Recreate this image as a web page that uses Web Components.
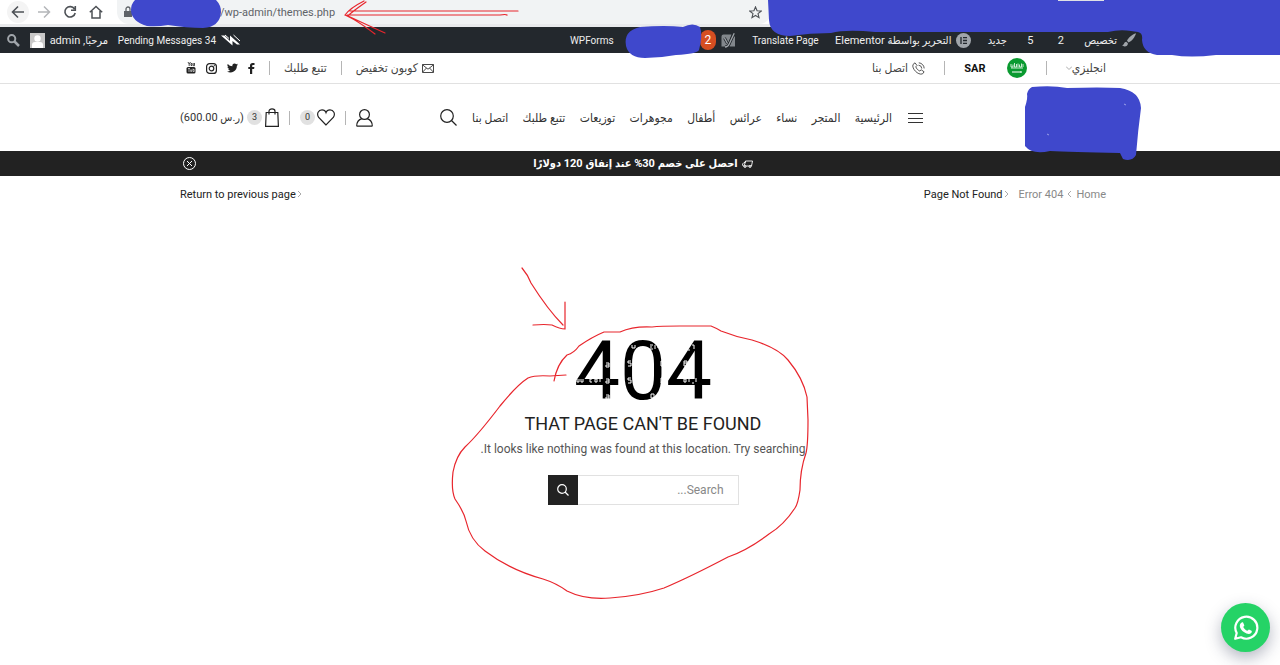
<!DOCTYPE html>
<html lang="ar">
<head>
<meta charset="utf-8">
<meta name="viewport" content="width=device-width, initial-scale=1">
<title>Page Not Found</title>
<style>
  body { margin: 0; background: #fff; }
</style>
</head>
<body>
<store-page></store-page>
<script>
const BASE = `
  *, *::before, *::after { box-sizing: border-box; }
  :host { display: block; }
  a { color: inherit; text-decoration: none; white-space: nowrap; }
  button { font: inherit; color: inherit; border: 0; padding: 0; background: none; cursor: pointer; display: inline-flex; align-items: center; justify-content: center; }
  svg { display: block; flex: none; }
  .wrap { width: min(926px, 100% - 32px); margin: 0 auto; }
  .row { display: flex; align-items: center; }
  .sep { width: 1px; height: 14px; background: #b5b5b5; flex: none; }
`;
function define(name, css, html) {
  const template = document.createElement('template');
  template.innerHTML = `<style>${BASE}${css}</style>${html}`;
  customElements.define(name, class extends HTMLElement {
    constructor() {
      super();
      this.attachShadow({ mode: 'open' }).append(template.content.cloneNode(true));
    }
  });
}

define('count-badge', `
  :host { display: flex; align-items: center; justify-content: center; width: 15px; height: 15px; border-radius: 50%; background: #e1e1e1; color: #333; font-size: 9px; line-height: 15px; }
`, `<slot></slot>`);

define('browser-bar', `
  header { display: flex; align-items: center; height: 24px; gap: 10px; padding-left: 7px; background: #fff; }
  nav { display: flex; gap: 4px; color: #4d5156; }
  nav button { width: 22px; height: 22px; border-radius: 50%; }
  nav button:first-child { background: #f4f4f4; }
  nav button:nth-child(2) { color: #b4b6b9; }
  .address { display: flex; align-items: center; width: 654px; height: 24px; padding: 0 9px 0 6px; background: #f1f3f4; border-radius: 0 0 12px 12px; color: #5f6368; }
  .address input { flex: 1; min-width: 0; height: 22px; border: 0; outline: 0; padding: 0 0 0 87px; background: none; font: 11px Roboto, sans-serif; color: #5f6368; }
  :host { border-bottom: 3px solid #e9eaec; background: #fff; }
`, `
<header>
  <nav>
    <button aria-label="Back"><svg width="14" height="14" viewBox="0 0 14 14" fill="none" stroke="currentColor" stroke-width="1.6"><path d="M13 7H2M7 1.500 1.500 7 7 12.500"/></svg></button>
    <button aria-label="Forward"><svg width="14" height="14" viewBox="0 0 14 14" fill="none" stroke="currentColor" stroke-width="1.500"><path d="M1 7h11M7 1.500 12.500 7 7 12.500"/></svg></button>
    <button aria-label="Reload"><svg width="14" height="14" viewBox="0 0 14 14" fill="none" stroke="currentColor" stroke-width="1.600"><path d="M11.500 4A5.200 5.200 0 1 0 12.200 8M12.300 1v4.300H8"/></svg></button>
    <button aria-label="Home"><svg width="14" height="14" viewBox="0 0 14 14" fill="none" stroke="currentColor" stroke-width="1.500"><path d="M.8 7.300 7 1.500l6.200 5.800M3 6v7h8V6"/></svg></button>
  </nav>
  <div class="address">
    <svg width="10" height="12" viewBox="0 0 10 12"><path d="M1 5h8v6H1z" fill="#5f6368"/><path d="M3 5V3a2 2 0 0 1 4 0v2" fill="none" stroke="#5f6368" stroke-width="1.300"/></svg>
    <input aria-label="Address" value="/wp-admin/themes.php">
    <button aria-label="Bookmark"><svg width="13" height="13" viewBox="0 0 14 14" fill="none" stroke="#4d5156" stroke-width="1.200"><path d="m7 1 1.700 4.100 4.500.3-3.500 2.800 1.100 4.300L7 10.200l-3.800 2.300 1.100-4.300L.8 5.400l4.500-.3z"/></svg></button>
  </div>
</header>`);

define('admin-bar', `
  header { display: flex; justify-content: space-between; height: 26px; background: #23282d; color: #eee; font-size: 11px; padding: 0 144px 0 7px; }
  .tools { width: 566px; justify-content: space-between; }
  .account { width: 234px; justify-content: space-between; }
  a { display: flex; align-items: center; gap: 5px; }
  .en { font-size: 10px; }
  .num { padding: 0 4px; }
  .alerts { gap: 5px; padding-left: 70px; }
  .pill { width: 16px; height: 20px; border-radius: 8px; background: #d54e21; color: #fff; font-size: 12px; line-height: 20px; text-align: center; }
`, `
<header dir="rtl">
  <nav class="row tools">
    <a href="#"><svg width="14" height="14" viewBox="0 0 14 14" fill="#a0a5aa"><path d="M14 .2C10 1.500 6 5 5 7.800l1.600 1.600C10 8 13 4 14 .2zM4.300 8.700C2 8.800 2.200 12 0 12.600c2.500 1.600 6 .8 5.900-2.300z"/></svg>تخصيص</a>
    <a href="#" class="num">2</a>
    <a href="#" class="num">5</a>
    <a href="#">جديد</a>
    <a href="#"><svg width="15" height="15" viewBox="0 0 15 15"><circle cx="7.500" cy="7.500" r="7.500" fill="#a0a5aa"/><path d="M5 4v7M7 4.700h4M7 7.500h4M7 10.300h4" stroke="#23282d" stroke-width="1.300"/></svg>التحرير بواسطة Elementor</a>
    <a href="#" class="en">Translate Page</a>
    <a href="#" class="alerts"><svg width="15" height="15" viewBox="0 0 15 15"><path d="M2.500 1.500h8L6 13.500H.5v-10a2 2 0 0 1 2-2zM14 3.500v10H8.500l4-10z" fill="#82878c"/><path d="m3.500 5 3 5.500M13.200.3 8.200 11q-1.200 3-4.200 3" fill="none" stroke="#23282d" stroke-width="2.800"/><path d="m3.500 5 3 5.500M13.200.3 8.200 11q-1.200 3-4.200 3" fill="none" stroke="#a0a5aa" stroke-width="1.300"/></svg><span class="pill">2</span></a>
    <a href="#" class="en">WPForms</a>
  </nav>
  <nav class="row account">
    <a href="#" class="en"><svg width="20" height="12" viewBox="0 0 20 12"><path d="M0 1.500h3.500L9 7V1.500L19 10.500h-3L11.500 7v4.500z" fill="#fff"/><path d="m4 1 4 3.500M12.500 1l6.500 6" stroke="#fff"/></svg>Pending Messages 34</a>
    <a href="#"><span>مرحبًا, admin</span><svg width="15" height="15" viewBox="0 0 15 15"><path d="M0 0h15v15H0z" fill="#c8c8c8"/><circle cx="7.500" cy="5.500" r="3.200" fill="#fff"/><path d="M2 15V12q0-3 3-3h5q3 0 3 3v3z" fill="#fff"/></svg></a>
    <button aria-label="بحث"><svg width="13" height="13" viewBox="0 0 13 13" fill="none" stroke="#a0a5aa"><circle cx="4.700" cy="4.700" r="3.600" stroke-width="2"/><path d="m7.500 7.500 4.500 4.500" stroke-width="2.500"/></svg></button>
  </nav>
</header>`);

define('top-bar', `
  :host { border-bottom: 1px solid #e1e1e1; color: #444; font-size: 12px; }
  .wrap { display: flex; justify-content: space-between; height: 30px; padding-left: 6px; }
  .locale { width: 234px; justify-content: space-between; }
  .links { width: 248px; justify-content: space-between; }
  a { display: flex; align-items: center; gap: 4px; }
  .language { gap: 0; }
  .currency { gap: 21px; color: #111; font-weight: 700; font-size: 11px; }
  .social { gap: 10px; color: #222; }
`, `
<div class="wrap" dir="rtl">
  <nav class="row locale">
    <a href="#" class="language">انجليزي<svg width="6" height="6" viewBox="0 0 6 6" fill="none" stroke="#aaa"><path d="m0 1.500 3 3 3-3"/></svg></a>
    <span class="sep"></span>
    <a href="#" class="currency"><svg width="20" height="20" viewBox="0 0 20 20"><circle cx="10" cy="10" r="10" fill="#0a9a30"/><path d="M4 6v3h2V6.500M7.500 5v4h2V6M11 9V5.500M12.500 6.500V9h2V5.500M16 6v3M4 10h12" fill="none" stroke="#dff3e3" stroke-width=".9"/><path d="M5 14h9.500M14 13.200v1.600" stroke="#fff" stroke-width="1"/></svg>SAR</a>
    <span class="sep"></span>
    <a href="#"><svg width="13" height="13" viewBox="0 0 13 13" fill="none" stroke="#444" stroke-width=".9"><path d="M1 2.500 3 .8l2 2.700-1.200 1.300c.7 2 2 3.300 4 4.200L9.200 7.800l2.900 2-1.600 2.100C6 13.500-.5 6.500 1 2.500zM6.500 3.200a3.500 3.500 0 0 1 3.300 3.400M6.800.8c3 .3 5.200 2.500 5.400 5.600"/></svg>اتصل بنا</a>
  </nav>
  <nav class="row links">
    <a href="#"><svg width="12" height="9" viewBox="0 0 12 9" fill="none" stroke="#333" stroke-width=".9"><path d="M.5.5h11v8H.5zM.5.800 6 5.200l5.500-4.400M.5 8.200l4-4.200M11.500 8.200l-4-4.200"/></svg>كوبون تخفيض</a>
    <span class="sep"></span>
    <a href="#">تتبع طلبك</a>
    <span class="sep"></span>
    <span class="row social">
      <a href="#" aria-label="Facebook"><svg width="7" height="11" viewBox="0 0 7 11" fill="currentColor"><path d="M2 11V6H.3V4H2V2.600C2 .9 3 0 4.600 0L6.500.1V2H5.200c-.8 0-1 .4-1 1v1h2.200L6.100 6H4.200v5z"/></svg></a>
      <a href="#" aria-label="Twitter"><svg width="11" height="10" viewBox="0 0 24 20" fill="currentColor"><path d="M24 2.400a10 10 0 0 1-2.800.8A5 5 0 0 0 23.300.500a10 10 0 0 1-3.100 1.200 4.900 4.900 0 0 0-8.400 4.500A14 14 0 0 1 1.700 1a4.900 4.900 0 0 0 1.500 6.600 5 5 0 0 1-2.200-.6 4.900 4.900 0 0 0 3.900 4.900 5 5 0 0 1-2.200.1 4.900 4.900 0 0 0 4.600 3.400A10 10 0 0 1 0 17.500 14 14 0 0 0 21.500 5 10 10 0 0 0 24 2.400z"/></svg></a>
      <a href="#" aria-label="Instagram"><svg width="11" height="11" viewBox="0 0 11 11" fill="none" stroke="currentColor"><rect x=".6" y=".6" width="9.800" height="9.800" rx="3" stroke-width="1.200"/><circle cx="5.500" cy="5.500" r="2.300" stroke-width="1.200"/><circle cx="8.400" cy="2.600" r=".3"/></svg></a>
      <a href="#" aria-label="YouTube"><svg width="10" height="12" viewBox="0 0 10 12"><rect x=".5" y="5" width="9" height="6.500" rx="1.500" fill="#222"/><path d="m2 0 1.200 2.200V4M4.500 0 3.200 2.200M5 1.500v2h1v-2zM7.200 1v2.700h1.300V1" fill="none" stroke="#222" stroke-width=".8"/><path d="M2 6.500h2M3 6.500V10M4.700 7.500v2h1v-2M7 6.500v3h1.200v-2H7" fill="none" stroke="#fff" stroke-width=".6"/></svg></a>
    </span>
  </nav>
</div>`);

define('main-header', `
  :host { color: #333; font-size: 12px; }
  .wrap { display: grid; grid-template-columns: minmax(0, 168px) 16px minmax(0, 420px) 17px minmax(0, 1fr); column-gap: 15px; align-items: center; height: 67px; }
  .logo { height: 40px; }
  .menu { justify-content: space-between; }
  .shop { width: 193px; justify-self: end; justify-content: space-between; }
  .shop a { display: flex; align-items: center; gap: 2px; }
  .shop .cart { gap: 3px; font-size: 11px; }
`, `
<div class="wrap" dir="rtl">
  <a href="#" class="logo" aria-label="المتجر"></a>
  <button aria-label="القائمة"><svg width="15" height="12" viewBox="0 0 15 12" stroke="#333"><path d="M0 1.500h15M0 6.500h15M0 10.500h15"/></svg></button>
  <nav class="row menu">
    <a href="#">الرئيسية</a><a href="#">المتجر</a><a href="#">نساء</a><a href="#">عرائس</a><a href="#">أطفال</a><a href="#">مجوهرات</a><a href="#">توزيعات</a><a href="#">تتبع طلبك</a><a href="#">اتصل بنا</a>
  </nav>
  <button aria-label="بحث"><svg width="17" height="17" viewBox="0 0 17 17" fill="none" stroke="#222" stroke-width="1.200"><circle cx="7" cy="7" r="6.300"/><path d="m11.500 11.500 5 5"/></svg></button>
  <div class="row shop">
    <a href="#" aria-label="حسابي"><svg width="17" height="18" viewBox="0 0 17 18" fill="none" stroke="#222" stroke-width="1.200"><circle cx="8.500" cy="5.500" r="4.900"/><path d="M.7 17.200C.7 13 3 10.500 6 9.700M16.300 17.200c0-4.200-2.300-6.700-5.300-7.500M.7 17.200h15.600"/></svg></a>
    <span class="sep"></span>
    <a href="#" aria-label="المفضلة"><svg width="18" height="17" viewBox="0 0 18 17" fill="none" stroke="#222" stroke-width="1.200"><path d="M9 16 1.700 8.500C-.8 4.500 1.500.8 5 .8c2 0 3.500 1.200 4 2.700C9.500 2 11 .8 13 .8c3.500 0 5.800 3.700 3.300 7.700z"/></svg><count-badge>0</count-badge></a>
    <span class="sep"></span>
    <a href="#" class="cart"><svg width="14" height="19" viewBox="0 0 14 19" fill="none" stroke="#222" stroke-width="1.200"><path d="M1.200 4.500h11.600l.6 13.800H.6zM4 6.500V3.200C4 .2 10 .2 10 3.200v3.300"/></svg><count-badge>3</count-badge><span>(ر.س 600.00)</span></a>
  </div>
</div>`);

define('promo-bar', `
  :host { background: #222; color: #fff; font-size: 11px; font-weight: 700; }
  .wrap { display: grid; grid-template-columns: 1fr auto 1fr; align-items: center; height: 25px; }
  p { grid-column: 2; display: flex; align-items: center; gap: 4px; margin: 0; line-height: 16px; white-space: nowrap; }
  button { justify-self: end; margin-left: 3px; }
`, `
<div class="wrap" dir="rtl">
  <p><svg width="11" height="8" viewBox="0 0 11 8" fill="none" stroke="#fff" stroke-width=".9"><path d="M3.500 1H10.500L9.500 6H1L.5 4 2 2.500h1.200zM3.500 1 2.500 5"/><circle cx="3" cy="6.500" r="1"/><circle cx="8" cy="6.500" r="1"/></svg><span>احصل على خصم 30% عند إنفاق 120 دولارًا</span></p>
  <button aria-label="إغلاق"><svg width="13" height="13" viewBox="0 0 13 13" fill="none" stroke="#fff"><circle cx="6.500" cy="6.500" r="6"/><path d="m4 4 5 5M9 4 4 9"/></svg></button>
</div>`);

define('crumb-bar', `
  :host { color: #222; font-size: 11px; }
  .wrap { display: flex; justify-content: space-between; height: 36px; }
  .trail { gap: 4px; color: #888; }
  .here { color: #222; margin-right: 6px; }
  .here, .back { display: flex; align-items: center; gap: 1px; white-space: nowrap; }
`, `
<div class="wrap" dir="rtl">
  <nav class="row trail">
    <a href="#">Home</a>
    <svg width="5" height="8" viewBox="0 0 5 8" fill="none" stroke="#aaa"><path d="M4 1 1 4l3 3"/></svg>
    <a href="#">Error 404</a>
    <span class="here"><svg width="5" height="8" viewBox="0 0 5 8" fill="none" stroke="#aaa"><path d="m1 1 3 3-3 3"/></svg>Page Not Found</span>
  </nav>
  <a href="#" class="back"><svg width="5" height="8" viewBox="0 0 5 8" fill="none" stroke="#aaa"><path d="m1 1 3 3-3 3"/></svg>Return to previous page</a>
</div>`);

define('not-found', `
  main { display: flex; flex-direction: column; align-items: center; padding: 120px 0 96px; text-align: center; }
  .code { position: relative; margin: 0; font: 82px/78px Roboto, sans-serif; color: #000; }
  .code svg { position: absolute; top: 9px; left: 0; }
  h1 { margin: 0; font-size: 18px; line-height: 28px; font-weight: 400; color: #222; }
  p.note { margin: 0; font-size: 12px; line-height: 22px; color: #555; }
  form { display: flex; width: 191px; height: 30px; margin-top: 15px; }
  input { flex: 1; min-width: 0; border: 1px solid #e1e1e1; border-left: 0; border-radius: 0; padding: 0 14px; font: inherit; font-size: 12px; color: #222; outline: 0; }
  input::placeholder { color: #888; opacity: 1; }
  form button { width: 30px; background: #222; }
`, `
<main dir="rtl">
  <p class="code">404<svg width="142" height="60" viewBox="0 0 142 60" fill="none" stroke="#fff" stroke-width="1" aria-hidden="true"><path d="M17 4v4M18 4h2M58 4v3h3V4M76 4h3M76 6h2M76 8h3M81 4v4M83 6h2M115 8v2M118 4h2v4M8 21v4M11 22l-2 2 2 2M32 22h3v4h-3v-2h3M57 20h-3v2h3v3h-3M90 20h-3v5h3v-3M110 20h3v5h-3zM110 22h3M3 38v3h2v-3M7 38v3h2v-3M18 38h-2v3h2M21 38h2v3h-2zM26 37v4M32 38h3v4h-3v-2h3M57 37h-3v2h3v3h-3M90 37h-3v5h3v-3M110 38h2v3h-2zM115 41v-3M119 41v2M122 37v4M32 54h3v4h-3v-2h3M77 53h3v4h-3zM82 55h2"/></svg></p>
  <h1>THAT PAGE CAN'T BE FOUND</h1>
  <p class="note">It looks like nothing was found at this location. Try searching.</p>
  <form role="search">
    <input type="text" aria-label="Search" placeholder="Search...">
    <button aria-label="Search"><svg width="12" height="12" viewBox="0 0 12 12" fill="none" stroke="#fff" stroke-width="1.200"><circle cx="5" cy="5" r="4.300"/><path d="m8 8 3.500 3.500"/></svg></button>
  </form>
</main>`);

define('chat-button', `
  :host { position: fixed; right: 10px; bottom: 13px; }
  a { display: flex; align-items: center; justify-content: center; width: 49px; height: 49px; border-radius: 50%; background: #25d366; box-shadow: 0 6px 16px rgba(40, 50, 80, .35); }
`, `
<a href="#" aria-label="WhatsApp"><svg width="26" height="26" viewBox="0 0 26 26"><path d="M2.200 23.800 3.700 18A11 11 0 1 1 8 22.300z" fill="none" stroke="#fff" stroke-width="2.200" stroke-linejoin="round"/><path d="M9.300 7.300c.5 0 .8 0 1 .6l1 2.300c.1.500-.9 1.300-1 1.700.8 1.800 2.300 3.100 4 3.900.6 0 1.200-1.500 1.700-1.300l2.500 1.200c.7.400.2 1.800-.3 2.400-1.300 1.300-3 1.200-4.700.5-3.200-1.400-5.500-3.600-6.500-6.300-.6-2 .1-4.500 2.300-5z" fill="#fff"/></svg></a>`);

define('ink-layer', `
  :host { position: absolute; inset: 0; overflow: hidden; pointer-events: none; }
`, `
<svg width="1280" height="665" viewBox="0 0 1280 665" aria-hidden="true">
  <g fill="#3f48cc">
    <path d="M135 0H216Q221 5 221 12Q220 27 203 28Q187 28 168 25Q157 27 147 26Q131 21 131 10Q131 4 135 0z"/>
    <path d="M640 27Q665 25 683 27Q693 22 700 27Q703 35 699 50Q697 54 676 55Q660 58 645 58Q629 58 626 46Q623 31 640 27z"/>
    <path d="M768 0H1280V55H1216Q1190 58 1172 55H1157Q1143 53 1142 40Q1143 33 1138 32L1131 31Q1120 29 1108 32H875Q846 29 831 33Q810 33 790 36Q770 36 769 20z"/>
    <path d="M1032 87Q1052 85 1067 88Q1100 87 1120 88Q1140 91 1141 108Q1138 130 1136 155Q1132 162 1123 159L1120 153Q1070 152 1050 151Q1032 155 1025 146V107Q1028 98 1027 94Q1028 89 1032 87z"/>
  </g>
  <path d="M1058 0h46" stroke="#dfe1e5" stroke-width="2"/>
  <path d="M1124 104l2 1M1047 134l2 1" stroke="#9ca1e8"/>
  <g fill="none" stroke="#e8262d" stroke-width="1.200" stroke-linecap="round">
    <path d="M518 11H350M507 15Q506 14 500 15H347M364 1Q350 8 345 15Q355 19 375 34M366 2Q349 14 348 16Q365 24 385 33"/>
    <path d="M522 268Q528 275 531 283Q548 310 563 325M565 302V329Q560 329 552 325Q545 324 533 325"/>
    <path d="M554 381Q557 364 567 355Q574 353 579 346Q592 337 604 332H620Q633 326 652 327Q660 326 680 326H711Q716 328 721 331Q736 337 752 340Q778 348 788 360Q803 378 807 397L808 420Q808 445 806 453Q800 470 800 490Q798 504 795 508Q784 525 769 534Q748 550 728 557Q690 577 664 588Q640 596 610 598Q585 600 567 591Q556 583 543 579Q510 570 485 551Q470 540 466 521Q464 512 455 499Q451 490 453 472Q456 456 465 447Q478 435 500 406Q517 385 528 378Q535 375 550 376L566 375"/>
  </g>
</svg>`);

define('store-page', `
  :host { position: relative; min-height: 100vh; font-family: Roboto, "DejaVu Sans Condensed", "DejaVu Sans", sans-serif; }
  promo-bar, top-bar, main-header, crumb-bar, not-found { padding-left: 6px; }
`, `
<browser-bar></browser-bar>
<admin-bar></admin-bar>
<top-bar></top-bar>
<main-header></main-header>
<promo-bar></promo-bar>
<crumb-bar></crumb-bar>
<not-found></not-found>
<ink-layer></ink-layer>
<chat-button></chat-button>`);
</script>
</body>
</html>
